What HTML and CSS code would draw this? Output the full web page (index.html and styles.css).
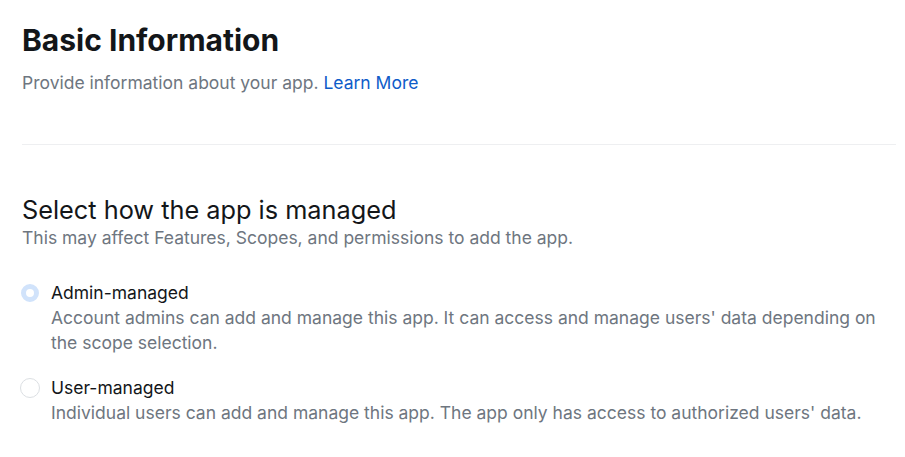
FILE: index.html
```html
<!DOCTYPE html>
<html>
<head>
<meta charset="utf-8">
<link rel="stylesheet" href="styles.css">
</head>
<body>
<div class="page">
  <h1 class="title">Basic Information</h1>
  <p class="subtitle">Provide information about your app. <a class="link" href="#">Learn More</a></p>
  <hr class="divider">
  <h2 class="section-title">Select how the app is managed</h2>
  <p class="section-desc">This may affect Features, Scopes, and permissions to add the app.</p>
  <div class="options">
    <label class="option">
      <span class="radio-wrap"><span class="radio radio-checked"></span></span>
      <span class="option-body">
        <span class="option-label">Admin-managed</span>
        <span class="option-desc">Account admins can add and manage this app. It can access and manage users' data depending on the scope selection.</span>
      </span>
    </label>
    <label class="option">
      <span class="radio-wrap"><span class="radio"></span></span>
      <span class="option-body">
        <span class="option-label">User-managed</span>
        <span class="option-desc">Individual users can add and manage this app. The app only has access to authorized users' data.</span>
      </span>
    </label>
  </div>
</div>
</body>
</html>
```

FILE: styles.css
```css
html, body {
  margin: 0;
  padding: 0;
  background: #ffffff;
}
body {
  font-family: Inter, "Noto Sans", sans-serif;
  color: #131619;
}
.page {
  padding: 20px 9px 0 22px;
}
.title {
  margin: 0;
  font-size: 30px;
  font-weight: 700;
  line-height: 40px;
  color: #131619;
}
.subtitle {
  margin: 11px 0 0;
  font-size: 17.5px;
  line-height: 24px;
  color: #6e7680;
}
.link {
  color: #0e5cc9;
  text-decoration: none;
}
.divider {
  border: 0;
  border-top: 1px solid #eeeff1;
  margin: 49px 0 0;
}
.section-title {
  margin: 49px 0 0;
  font-size: 25.3px;
  font-weight: 400;
  line-height: 32px;
  color: #131619;
}
.section-desc {
  margin: 0;
  font-size: 17.5px;
  line-height: 24px;
  color: #6e7680;
}
.options {
  margin-top: 30px;
  display: flex;
  flex-direction: column;
  gap: 20px;
}
.option {
  display: flex;
  gap: 11px;
  align-items: flex-start;
}
.radio-wrap {
  flex: none;
  width: 20px;
  height: 25px;
  margin-left: -2px;
  display: flex;
  align-items: center;
  justify-content: center;
}
.radio {
  width: 20px;
  height: 20px;
  box-sizing: border-box;
  border-radius: 50%;
  border: 1px solid #dcdfe3;
  background: #fff;
}
.radio-checked {
  width: 18px;
  height: 18px;
  border: 5px solid #d1e3fb;
}
.option-body {
  display: flex;
  flex-direction: column;
}
.option-label {
  font-size: 17.5px;
  line-height: 25px;
  color: #131619;
}
.option-desc {
  font-size: 17.5px;
  line-height: 25px;
  color: #6e7680;
}
```
